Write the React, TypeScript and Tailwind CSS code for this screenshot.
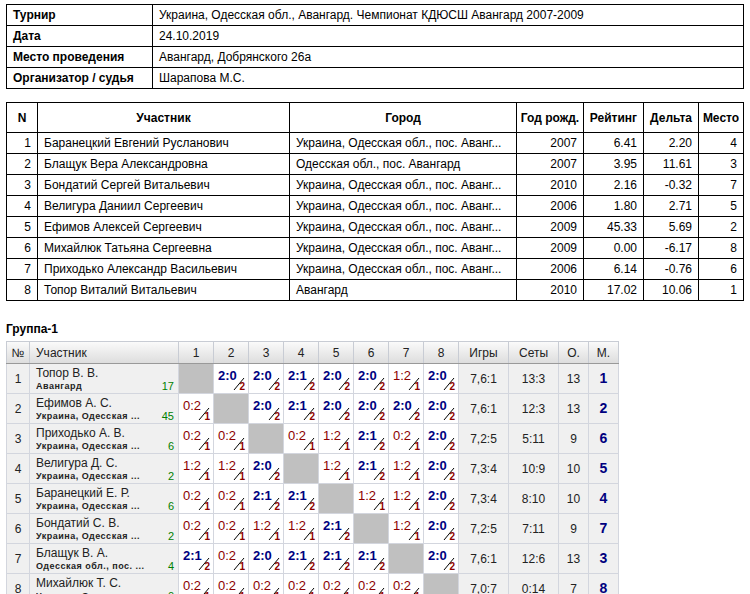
const info = [
  ["Турнир", "Украина, Одесская обл., Авангард. Чемпионат КДЮСШ Авангард 2007-2009"],
  ["Дата", "24.10.2019"],
  ["Место проведения", "Авангард, Добрянского 26а"],
  ["Организатор / судья", "Шарапова М.С."],
];

const players = [
  ["1", "Баранецкий Евгений Русланович", "Украина, Одесская обл., пос. Аванг...", "2007", "6.41", "2.20", "4"],
  ["2", "Блащук Вера Александровна", "Одесская обл., пос. Авангард", "2007", "3.95", "11.61", "3"],
  ["3", "Бондатий Сергей Витальевич", "Украина, Одесская обл., пос. Аванг...", "2010", "2.16", "-0.32", "7"],
  ["4", "Велигура Даниил Сергеевич", "Украина, Одесская обл., пос. Аванг...", "2006", "1.80", "2.71", "5"],
  ["5", "Ефимов Алексей Сергеевич", "Украина, Одесская обл., пос. Аванг...", "2009", "45.33", "5.69", "2"],
  ["6", "Михайлюк Татьяна Сергеевна", "Украина, Одесская обл., пос. Аванг...", "2009", "0.00", "-6.17", "8"],
  ["7", "Приходько Александр Васильевич", "Украина, Одесская обл., пос. Аванг...", "2006", "6.14", "-0.76", "6"],
  ["8", "Топор Виталий Витальевич", "Авангард", "2010", "17.02", "10.06", "1"],
];

const group = [
  { name: "Топор В. В.", city: "Авангард", r: "17", s: ["x", "2:0", "2:0", "2:1", "2:0", "2:0", "1:2", "2:0"], g: "7,6:1", sets: "13:3", o: "13", m: "1" },
  { name: "Ефимов А. С.", city: "Украина, Одесская ...", r: "45", s: ["0:2", "x", "2:0", "2:1", "2:0", "2:0", "2:0", "2:0"], g: "7,6:1", sets: "12:3", o: "13", m: "2" },
  { name: "Приходько А. В.", city: "Украина, Одесская ...", r: "6", s: ["0:2", "0:2", "x", "0:2", "1:2", "2:1", "0:2", "2:0"], g: "7,2:5", sets: "5:11", o: "9", m: "6" },
  { name: "Велигура Д. С.", city: "Украина, Одесская ...", r: "2", s: ["1:2", "1:2", "2:0", "x", "1:2", "2:1", "1:2", "2:0"], g: "7,3:4", sets: "10:9", o: "10", m: "5" },
  { name: "Баранецкий Е. Р.", city: "Украина, Одесская ...", r: "6", s: ["0:2", "0:2", "2:1", "2:1", "x", "1:2", "1:2", "2:0"], g: "7,3:4", sets: "8:10", o: "10", m: "4" },
  { name: "Бондатий С. В.", city: "Украина, Одесская ...", r: "2", s: ["0:2", "0:2", "1:2", "1:2", "2:1", "x", "1:2", "2:0"], g: "7,2:5", sets: "7:11", o: "9", m: "7" },
  { name: "Блащук В. А.", city: "Одесская обл., пос. ...", r: "4", s: ["2:1", "0:2", "2:0", "2:1", "2:1", "2:1", "x", "2:0"], g: "7,6:1", sets: "12:6", o: "13", m: "3" },
  { name: "Михайлюк Т. С.", city: "Украина, Одесская ...", r: "0", s: ["0:2", "0:2", "0:2", "0:2", "0:2", "0:2", "0:2", "x"], g: "7,0:7", sets: "0:14", o: "7", m: "8" },
];

const td = "border border-black px-[6px] h-[21px] whitespace-nowrap overflow-hidden";
const gtd = "border border-[#d3d6de] h-[30px] text-center";

function Score({ v }: { v: string }) {
  if (v === "x") return <td className={`${gtd} bg-[#c0c0c0]`} />;
  const [a, b] = v.split(":").map(Number);
  const win = a > b;
  return (
    <td className={`${gtd} bg-white relative p-0`}>
      <span className={`absolute left-[4px] top-[5px] text-[13px] leading-none ${win ? "font-bold text-[#00007f]" : "text-[#8b0000]"}`}>{v}</span>
      <svg className="absolute left-[19px] top-[13px]" width="12" height="14">
        <line x1="1" y1="13" x2="11" y2="1" stroke="#000" strokeWidth="1" />
      </svg>
      <span className="absolute right-[3px] bottom-[1px] text-[10px] font-bold leading-none text-[#8b0000]">{win ? "2" : "1"}</span>
    </td>
  );
}

export default function App() {
  return (
    <div className="w-[750px] h-[594px] bg-white text-black text-[12px] px-[6px] pt-[4px]" style={{ fontFamily: "'Liberation Sans', Arial, sans-serif" }}>
      <table className="border-collapse w-[738px] table-fixed text-[12px]">
        <colgroup><col className="w-[146px]" /><col /></colgroup>
        <tbody>
          {info.map(([k, v]) => (
            <tr key={k}>
              <td className={`${td} font-bold`}>{k}</td>
              <td className={td}>{v}</td>
            </tr>
          ))}
        </tbody>
      </table>

      <table className="border-collapse w-[738px] table-fixed mt-[13px] text-[12px]">
        <colgroup>
          <col className="w-[31px]" /><col className="w-[252px]" /><col className="w-[227px]" /><col className="w-[67px]" />
          <col className="w-[60px]" /><col className="w-[55px]" /><col />
        </colgroup>
        <thead>
          <tr className="font-bold">
            {["N", "Участник", "Город", "Год рожд.", "Рейтинг", "Дельта", "Место"].map((h) => (
              <td key={h} className="border border-black h-[30px] text-center px-[2px] whitespace-nowrap">{h}</td>
            ))}
          </tr>
        </thead>
        <tbody>
          {players.map((p) => (
            <tr key={p[0]}>
              <td className={`${td} h-[20px] text-right`}>{p[0]}</td>
              <td className={`${td} h-[20px]`}>{p[1]}</td>
              <td className={`${td} h-[20px]`}>{p[2]}</td>
              <td className={`${td} h-[20px] text-right`}>{p[3]}</td>
              <td className={`${td} h-[20px] text-right`}>{p[4]}</td>
              <td className={`${td} h-[20px] text-right`}>{p[5]}</td>
              <td className={`${td} h-[20px] text-right`}>{p[6]}</td>
            </tr>
          ))}
        </tbody>
      </table>

      <div className="font-bold mt-[19px] mb-[3px] text-[12px]">Группа-1</div>

      <table className="border-collapse table-fixed w-[612px] text-[12px] text-[#222]">
        <colgroup>
          <col className="w-[23px]" /><col className="w-[149px]" />
          {[1, 2, 3, 4, 5, 6, 7, 8].map((i) => <col key={i} className="w-[35px]" />)}
          <col className="w-[50px]" /><col className="w-[50px]" /><col className="w-[30px]" /><col className="w-[30px]" />
        </colgroup>
        <thead>
          <tr className="bg-gradient-to-b from-[#fafafa] to-[#dcdcdc]">
            {["№", "Участник", "1", "2", "3", "4", "5", "6", "7", "8", "Игры", "Сеты", "О.", "М."].map((h, i) => (
              <td key={h} className={`border border-[#c8ccd4] border-b-[#999] h-[22px] font-normal ${i === 1 ? "text-left pl-[6px]" : "text-center"}`}>{h}</td>
            ))}
          </tr>
        </thead>
        <tbody>
          {group.map((g, i) => (
            <tr key={g.name} className="bg-[#f0f0f0] h-[30px]">
              <td className={gtd}>{i + 1}</td>
              <td className={`${gtd} text-left pl-[6px] pr-[4px] overflow-hidden`}>
                <div className="text-[12px] leading-[14px] whitespace-nowrap">{g.name}</div>
                <div className="flex justify-between items-end leading-[12px] whitespace-nowrap">
                  <span className="font-bold text-[9px] tracking-[0.5px] overflow-hidden">{g.city}</span>
                  <span className="text-[11px] text-[#008000]">{g.r}</span>
                </div>
              </td>
              {g.s.map((v, j) => <Score key={j} v={v} />)}
              <td className={gtd}>{g.g}</td>
              <td className={gtd}>{g.sets}</td>
              <td className={gtd}>{g.o}</td>
              <td className={`${gtd} font-bold text-[14px] text-[#00007f]`}>{g.m}</td>
            </tr>
          ))}
        </tbody>
      </table>
    </div>
  );
}
